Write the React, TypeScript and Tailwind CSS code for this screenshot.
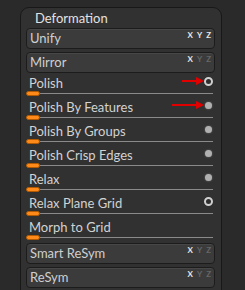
import React from 'react';

type Dot = 'ring' | 'fill' | null;

const sliders: { label: string; dot: Dot; arrow?: number }[] = [
    { label: 'Polish', dot: 'ring', arrow: 182 },
    { label: 'Polish By Features', dot: 'fill', arrow: 172 },
    { label: 'Polish By Groups', dot: 'fill' },
    { label: 'Polish Crisp Edges', dot: 'fill' },
    { label: 'Relax', dot: 'fill' },
    { label: 'Relax Plane Grid', dot: 'ring' },
    { label: 'Morph to Grid', dot: null },
];

const Xyz = ({ all }: { all: boolean }) => (
    <div className="absolute right-[3px] top-[2px] flex gap-[4px] text-[8px] font-bold leading-none">
        <span className="text-[#e8e8e8]">X</span>
        <span className={all ? 'text-[#e8e8e8]' : 'text-[#666]'}>Y</span>
        <span className={all ? 'text-[#e8e8e8]' : 'text-[#666]'}>Z</span>
    </div>
);

const Button = ({ label, all = false }: { label: string; all?: boolean }) => (
    <div className="relative flex h-[21px] w-[189px] items-center rounded-[4px] border border-[#1c1c1c] bg-[#3b3b3b] pl-[3px] text-[13px] text-[#cfcfcf] shadow-[inset_0_1px_0_#474747]">
        {label}
        <Xyz all={all} />
    </div>
);

const Arrow = ({ left }: { left: number }) => (
    <svg
        className="absolute top-[4px]"
        style={{ left: left - 26 }}
        width={204 - left}
        height="8"
        viewBox={`0 0 ${204 - left} 8`}
    >
        <line x1="0" y1="4" x2={204 - left - 7} y2="4" stroke="#e00000" strokeWidth="2" />
        <polygon points={`${204 - left - 8},0 ${204 - left},4 ${204 - left - 8},8`} fill="#e00000" />
    </svg>
);

const Slider = ({ label, dot, arrow }: { label: string; dot: Dot; arrow?: number }) => (
    <div className="relative h-[24px] w-[189px]">
        <div className="pl-[3px] pt-[3px] text-[13px] leading-[15px] text-[#d2d2d2]">{label}</div>
        <div className="absolute left-[14px] right-[2px] top-[20px] h-px bg-[#8a8a8a]" />
        <div className="absolute left-0 top-[18px] h-[5px] w-[14px] rounded-full border border-[#b35a00] bg-[#ff8a1a]" />
        {dot === 'ring' && (
            <div className="absolute left-[178px] top-[4px] h-[9px] w-[9px] rounded-full border-2 border-[#d0d0d0] bg-[#2e2e2e]" />
        )}
        {dot === 'fill' && (
            <div className="absolute left-[179px] top-[5px] h-[7px] w-[7px] rounded-full bg-[#b0b0b0] shadow-[0_0_2px_#777]" />
        )}
        {arrow && <Arrow left={arrow} />}
    </div>
);

const App = () => {
    return (
        <div
            className="h-[290px] w-[245px] overflow-hidden bg-[#2a2a2a] pl-[20px] pt-[7px]"
            style={{ fontFamily: 'Lato, "Open Sans", sans-serif' }}
        >
            <div className="h-[300px] w-[202px] rounded-t-[9px] border border-[#181818] bg-[#313131] px-[5px]">
                <div className="h-[20px] pl-[9px] pt-[2px] text-[13px] leading-[16px] text-[#e2e2e2]">Deformation</div>
                <div className="flex flex-col gap-[3px]">
                    <Button label="Unify" all />
                    <Button label="Mirror" />
                </div>
                <div className="flex flex-col">
                    {sliders.map((s) => (
                        <Slider key={s.label} label={s.label} dot={s.dot} arrow={s.arrow} />
                    ))}
                </div>
                <div className="mt-[2px] flex flex-col gap-[3px]">
                    <Button label="Smart ReSym" />
                    <Button label="ReSym" />
                </div>
            </div>
        </div>
    );
};

export default App;
